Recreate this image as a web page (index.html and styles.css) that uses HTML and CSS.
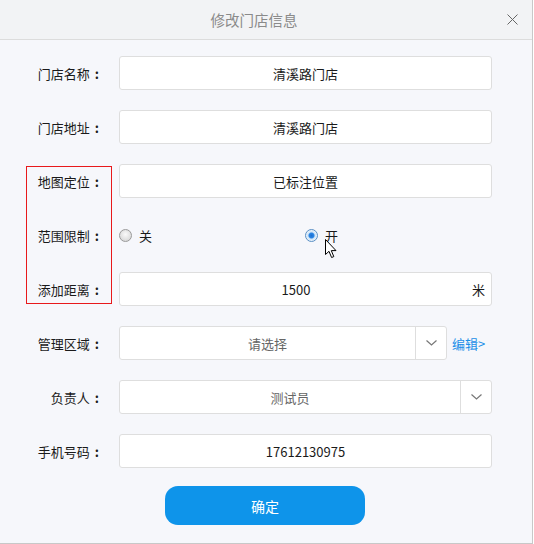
FILE: index.html
```html
<!DOCTYPE html>
<html lang="zh-CN">
<head>
    <meta charset="UTF-8">
    <meta name="viewport" content="width=device-width, initial-scale=1.0">
    <title>修改门店信息</title>
    <link rel="stylesheet" href="styles.css">
</head>
<body>
    <div class="dialog">
        <div class="dialog-header">
            <span class="dialog-title">修改门店信息</span>
            <span class="dialog-close">
                <svg width="11" height="11" viewBox="0 0 11 11"><path d="M0.5 0.5 L10.5 10.5 M10.5 0.5 L0.5 10.5" stroke="#666" stroke-width="1" fill="none"/></svg>
            </span>
        </div>

        <div class="dialog-body">
            <div class="form-row">
                <label class="form-label">门店名称</label>
                <div class="field"><span class="field-text">清溪路门店</span></div>
            </div>
            <div class="form-row">
                <label class="form-label">门店地址</label>
                <div class="field"><span class="field-text">清溪路门店</span></div>
            </div>

            <div class="form-group marked">
                <div class="form-row">
                    <label class="form-label">地图定位</label>
                    <div class="field"><span class="field-text">已标注位置</span></div>
                </div>
                <div class="form-row">
                    <label class="form-label">范围限制</label>
                    <div class="radio-group">
                        <span class="radio-item"><span class="radio"></span>关</span>
                        <span class="radio-item"><span class="radio checked"></span>开</span>
                    </div>
                    <svg class="cursor" width="13" height="20" viewBox="0 0 13 20">
                        <path d="M0.5 0.5 L0.5 15.5 L4 12.3 L6.6 18.5 L8.8 17.6 L6.3 11.6 L11 11.6 Z" fill="#fff" stroke="#000" stroke-width="1" stroke-linejoin="round"/>
                    </svg>
                </div>
                <div class="form-row">
                    <label class="form-label">添加距离</label>
                    <div class="field">
                        <span class="field-text">1500</span>
                        <span class="field-unit">米</span>
                    </div>
                </div>
            </div>

            <div class="form-row">
                <label class="form-label">管理区域</label>
                <div class="select short">
                    <span class="select-text">请选择</span>
                    <span class="select-arrow">
                        <svg width="11" height="6" viewBox="0 0 11 6"><path d="M0.5 0.5 L5.5 5 L10.5 0.5" stroke="#777" stroke-width="1.2" fill="none"/></svg>
                    </span>
                </div>
                <a class="edit-link">编辑&gt;</a>
            </div>
            <div class="form-row">
                <label class="form-label">负责人</label>
                <div class="select">
                    <span class="select-text">测试员</span>
                    <span class="select-arrow">
                        <svg width="11" height="6" viewBox="0 0 11 6"><path d="M0.5 0.5 L5.5 5 L10.5 0.5" stroke="#777" stroke-width="1.2" fill="none"/></svg>
                    </span>
                </div>
            </div>
            <div class="form-row">
                <label class="form-label">手机号码</label>
                <div class="field"><span class="field-text">17612130975</span></div>
            </div>

            <div class="actions">
                <button class="btn-ok">确定</button>
            </div>
        </div>
    </div>
</body>
</html>
```

FILE: styles.css
```css
body {
    margin: 0;
    padding: 0;
    background: #fff;
    font-family: "Noto Sans CJK SC", "Noto Sans", sans-serif;
    font-size: 13px;
    color: #1a1a1a;
}

.dialog {
    width: 532px;
    height: 543px;
    border-right: 1px solid #c8c8c8;
    border-bottom: 1px solid #c8c8c8;
    background: #f6f7fb;
}

.dialog-header {
    height: 39px;
    border-bottom: 1px solid #dcdcdc;
    background: #f2f3f5;
    display: flex;
    align-items: center;
    justify-content: center;
    position: relative;
}

.dialog-title {
    font-size: 14.5px;
    color: #8a8a8a;
    margin-right: 24px;
}

.dialog-close {
    position: absolute;
    right: 14px;
    top: 14px;
    width: 11px;
    height: 11px;
    display: flex;
}

.dialog-body {
    padding-top: 16px;
    display: flex;
    flex-direction: column;
    gap: 20px;
}

.form-group {
    display: flex;
    flex-direction: column;
    gap: 20px;
    position: relative;
}

/* red annotation box round the three labels */
.form-group.marked::before {
    content: "";
    position: absolute;
    left: 26px;
    top: 2px;
    width: 84px;
    bottom: 2px;
    border: 1px solid #e8191b;
}

.form-row {
    display: flex;
    align-items: center;
    height: 34px;
    position: relative;
}

.form-label {
    width: 101px;
    margin-right: 18px;
    text-align: right;
}

.form-label::after {
    content: ":";
    margin: 0 2px 0 5px;
    font-weight: bold;
}

.field {
    width: 371px;
    height: 32px;
    background: #fff;
    border: 1px solid #dedede;
    border-radius: 3px;
    display: flex;
    align-items: center;
}

.field-text {
    flex: 1;
    text-align: center;
}

.field-unit {
    width: 19px;
    text-align: left;
}

.radio-group {
    display: flex;
    width: 373px;
}

.radio-item {
    width: 186px;
    display: flex;
    align-items: center;
    gap: 7px;
}

.radio {
    width: 11px;
    height: 11px;
    border-radius: 50%;
    border: 1px solid #9a9a9a;
    background: radial-gradient(circle at 50% 40%, #fafafa 0%, #d8d8d8 80%);
    display: inline-block;
}

.radio.checked {
    border-color: #5a8fc4;
    background: radial-gradient(circle, #1e6fd0 0, #2a86e6 2.5px, #cde3f7 3.5px, #eaf3fb 5.5px);
}

.cursor {
    position: absolute;
    left: 325px;
    top: 21px;
}

.select {
    width: 371px;
    height: 32px;
    background: #fff;
    border: 1px solid #dedede;
    border-radius: 3px;
    display: flex;
    align-items: stretch;
}

.select.short {
    width: 326px;
}

.select-text {
    flex: 1;
    display: flex;
    align-items: center;
    justify-content: center;
    color: #666;
}

.select-arrow {
    width: 30px;
    border-left: 1px solid #dedede;
    display: flex;
    align-items: center;
    justify-content: center;
}

.edit-link {
    margin-left: 5px;
    color: #1a8ee8;
    cursor: pointer;
}

.actions {
    display: flex;
    justify-content: center;
    margin-top: -2px;
    padding-right: 2px;
}

.btn-ok {
    width: 200px;
    height: 39px;
    border: none;
    border-radius: 13px;
    background: #0e94ea;
    color: #fff;
    font-family: inherit;
    font-size: 14px;
    cursor: pointer;
}
```
